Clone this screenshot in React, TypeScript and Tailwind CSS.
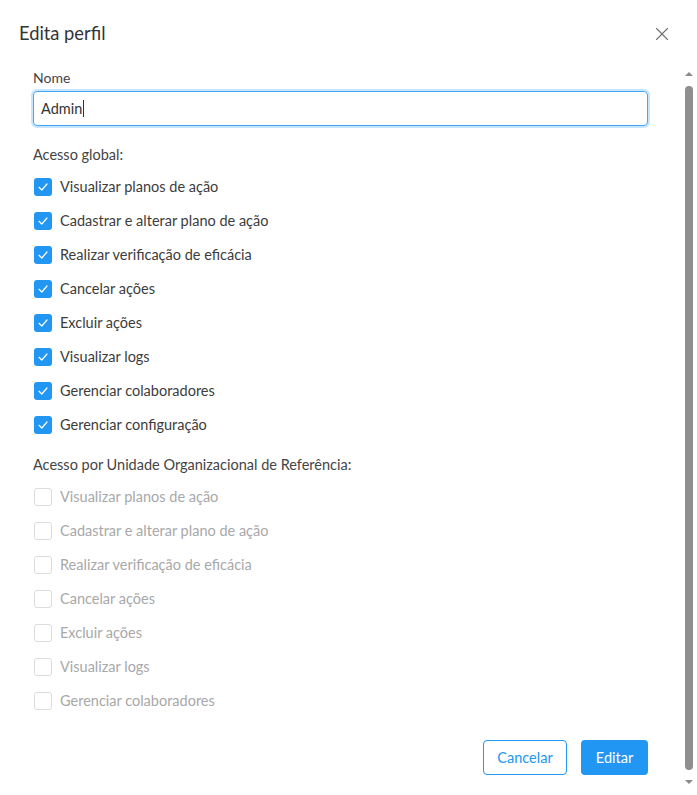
import { X } from "lucide-react";

const globalPerms = [
  "Visualizar planos de ação",
  "Cadastrar e alterar plano de ação",
  "Realizar verificação de eficácia",
  "Cancelar ações",
  "Excluir ações",
  "Visualizar logs",
  "Gerenciar colaboradores",
  "Gerenciar configuração",
];

const unitPerms = globalPerms.slice(0, 7);

function Check({ label, on }: { label: string; on: boolean }) {
  return (
    <div className="flex h-[34px] items-center">
      {on ? (
        <span className="ml-[1px] flex h-[18px] w-[18px] items-center justify-center rounded-[3px] bg-[#2196f3]">
          <svg width="12" height="12" viewBox="0 0 12 12" fill="none">
            <path d="M2 6.3 L4.8 9 L10 3" stroke="white" strokeWidth="1.2" strokeLinecap="round" strokeLinejoin="round" />
          </svg>
        </span>
      ) : (
        <span className="ml-[1px] h-[18px] w-[18px] rounded-[3px] border border-[#dcdcdc] bg-white" />
      )}
      <span className={`ml-[8px] text-[14.5px] ${on ? "text-[#3c3c3c]" : "text-[#a8a8a8]"}`}>{label}</span>
    </div>
  );
}

export default function App() {
  return (
    <div className="h-[795px] w-[697px] overflow-hidden bg-white font-['Lato',sans-serif]">
      {/* cabeçalho */}
      <div className="flex h-[68px] items-center justify-between pl-[19px] pr-[24px]">
        <h1 className="text-[18.3px] text-[#333]">Edita perfil</h1>
        <X className="h-[22px] w-[22px] text-[#707070]" strokeWidth={1.2} />
      </div>

      <div className="flex">
        <div className="w-[648px] pl-[33px]">
          <div className="flex h-[18px] items-center text-[14px] text-[#444]">Nome</div>
          <div className="mt-[5px] flex h-[35px] items-center rounded-[4px] border border-[#42a5f5] px-[7px] text-[14.5px] text-[#333] shadow-[0_0_0_2px_rgba(33,150,243,0.25)]">
            Admin<span className="ml-[1px] h-[17px] w-[1px] bg-[#333]" />
          </div>

          <div className="mt-[19px] flex h-[20px] items-center text-[14.5px] text-[#444]">Acesso global:</div>
          <div className="mt-[5px]">
            {globalPerms.map((p) => (
              <Check key={p} label={p} on />
            ))}
          </div>

          <div className="mt-[13px] flex h-[20px] items-center text-[14.5px] text-[#444]">
            Acesso por Unidade Organizacional de Referência:
          </div>
          <div className="mt-[5px]">
            {unitPerms.map((p) => (
              <Check key={p} label={p} on={false} />
            ))}
          </div>

          <div className="mt-[22px] flex justify-end gap-[14px]">
            <button className="h-[35px] w-[84px] rounded-[4px] border border-[#2196f3] text-[14.5px] text-[#2196f3]">
              Cancelar
            </button>
            <button className="h-[35px] w-[67px] rounded-[4px] bg-[#2196f3] text-[14.5px] text-white">Editar</button>
          </div>
        </div>

        {/* barra de rolagem */}
        <div className="ml-[36px] flex w-[10px] flex-col items-center pt-[4px]">
          <span className="h-0 w-0 border-x-[4px] border-b-[4px] border-x-transparent border-b-[#8a8a8a]" />
          <span className="mt-[10px] h-[684px] w-[8px] rounded-full bg-[#8f8f8f]" />
          <span className="mt-[10px] h-0 w-0 border-x-[4px] border-t-[4px] border-x-transparent border-t-[#8a8a8a]" />
        </div>
      </div>
    </div>
  );
}
